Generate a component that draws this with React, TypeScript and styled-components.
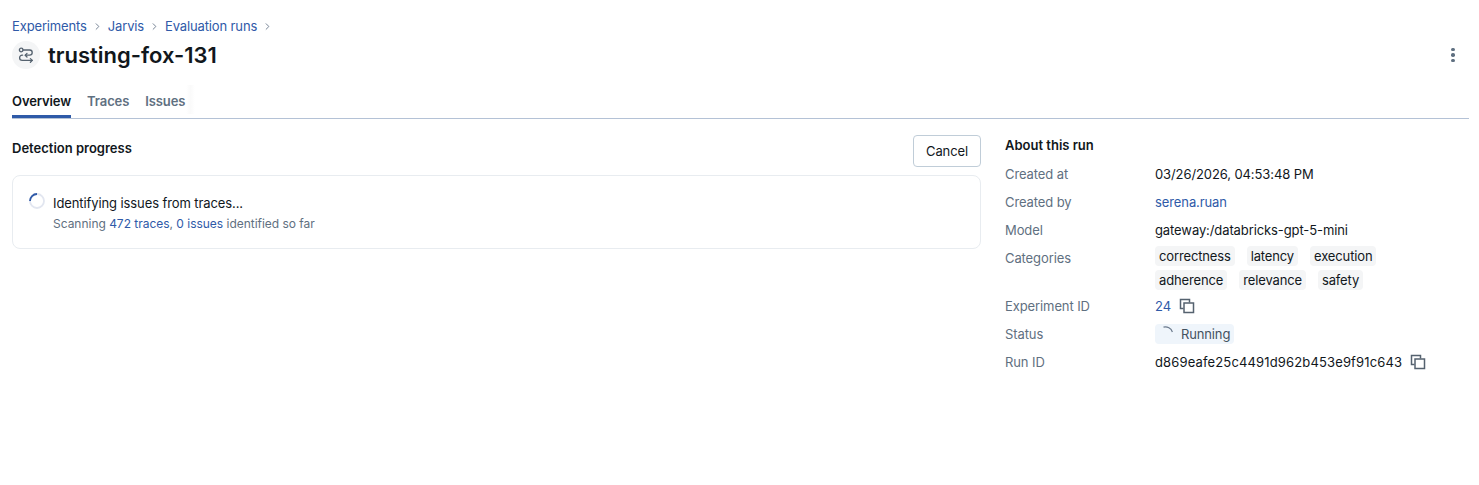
import React from 'react';
import styled, { createGlobalStyle } from 'styled-components';
import { ChevronRight } from 'lucide-react';

const GlobalStyle = createGlobalStyle`
  html, body {
    margin: 0;
    padding: 0;
    background: #fff;
    font-family: Inter, "Liberation Sans", sans-serif;
    font-size: 13px;
    letter-spacing: -0.1px;
    color: #11171c;
  }
`;

const Page = styled.div`
  padding: 16px 10px 0 12px;
  height: 485px;
  box-sizing: border-box;
  overflow: hidden;
`;

const Breadcrumbs = styled.nav`
  display: flex;
  align-items: center;
  height: 20px;
  color: #6b7a8c;
`;

const Crumb = styled.a`
  color: #2f5aa8;
  font-size: 13px;
  letter-spacing: -0.14px;
`;

const Separator = styled.span`
  display: flex;
  width: 21px;
  justify-content: center;
`;

const TitleRow = styled.div`
  display: flex;
  align-items: center;
  margin-top: 2px;
  height: 34px;
`;

const TitleIcon = styled.span`
  display: flex;
  align-items: center;
  justify-content: center;
  width: 28px;
  height: 28px;
  border-radius: 50%;
  background: #f4f5f6;
  color: #55626f;
`;

const Title = styled.h1`
  margin: 0 0 0 8px;
  font-size: 22px;
  line-height: 28px;
  font-weight: 600;
  letter-spacing: 0;
  color: #11171c;
`;

const MenuButton = styled.button`
  margin-left: auto;
  margin-right: 8px;
  width: 16px;
  height: 16px;
  padding: 0;
  display: flex;
  flex-direction: column;
  align-items: center;
  justify-content: center;
  gap: 2px;
  border: 0;
  background: none;
`;

const Dot = styled.span`
  width: 3.5px;
  height: 3.5px;
  border-radius: 50%;
  background: #5f7081;
`;

const Tabs = styled.div`
  display: flex;
  gap: 16px;
  margin-top: 13px;
  height: 33px;
  border-bottom: 1px solid #b4c2d6;
`;

const Tab = styled.div<{ $active?: boolean }>`
  height: 33px;
  box-sizing: border-box;
  padding-top: 6px;
  font-size: 13px;
  line-height: 20px;
  font-weight: 600;
  color: ${p => (p.$active ? '#11171c' : '#5f7081')};
  border-bottom: 3px solid ${p => (p.$active ? '#2f5aa8' : 'transparent')};
`;

const TabFade = styled.span`
  width: 9px;
  height: 29px;
  margin-left: -15px;
  background: linear-gradient(90deg, #fff, #fafafa 50%, #fff);
`;

const Columns = styled.div`
  display: grid;
  grid-template-columns: 969px 1fr;
  gap: 24px;
  margin-top: 16px;
`;

const SectionHead = styled.div`
  display: flex;
  align-items: center;
  justify-content: space-between;
  height: 32px;
`;

const SectionTitle = styled.h2`
  margin: 0;
  font-size: 13px;
  line-height: 20px;
  font-weight: 600;
  letter-spacing: 0;
  color: #11171c;
`;

const DetectionTitle = styled(SectionTitle)`
  padding-bottom: 6px;
`;

const CancelButton = styled.button`
  width: 68px;
  height: 32px;
  padding: 0;
  border: 1px solid #c0cdd8;
  border-radius: 4px;
  background: #fff;
  font: inherit;
  letter-spacing: inherit;
  color: #11171c;
`;

const ProgressCard = styled.div`
  margin-top: 8px;
  display: flex;
  gap: 8px;
  height: 74px;
  box-sizing: border-box;
  padding: 17px 16px 16px;
  border: 1px solid #e8ecf0;
  border-radius: 8px;
`;

const SpinnerWrap = styled.span`
  display: flex;
  width: 16px;
  height: 16px;
`;

const ProgressText = styled.div`
  display: flex;
  flex-direction: column;
  line-height: 20px;
  gap: 2px;
`;

const ProgressSub = styled.div`
  font-size: 12px;
  line-height: 18px;
  letter-spacing: -0.02px;
  color: #5f7081;
`;

const Link = styled.a`
  color: #2f5aa8;
`;

const AboutTitle = styled(SectionTitle)`
  margin-bottom: 5px;
`;

const Row = styled.div`
  display: grid;
  grid-template-columns: 150px 1fr;
  min-height: 28px;
  align-items: start;
  line-height: 20px;
  padding-top: 4px;
  box-sizing: border-box;
`;

const Label = styled.span`
  font-size: 13px;
  color: #5f7081;
`;

const Value = styled.span`
  display: flex;
  align-items: center;
  gap: 8px;
  font-size: 13px;
  color: #11171c;
`;

const RunId = styled.span`
  letter-spacing: 0.145px;
`;

const TagList = styled.div`
  display: flex;
  flex-wrap: wrap;
  gap: 4px 12px;
  margin-top: -2px;
  padding-bottom: 2px;
  width: 260px;
`;

const Tag = styled.span`
  height: 20px;
  padding: 0 4px;
  border-radius: 4px;
  background: #f4f5f6;
  line-height: 20px;
  font-size: 13px;
  letter-spacing: -0.14px;
  color: #11171c;
`;

const StatusPill = styled.span`
  display: inline-flex;
  align-items: center;
  gap: 6px;
  height: 20px;
  padding: 0 4px;
  border-radius: 4px;
  background: #eff5fb;
  letter-spacing: -0.14px;
  color: #44525f;
`;

const RunsIcon = () => (
  <svg width="16" height="16" viewBox="0 0 16 16" fill="none" stroke="currentColor" strokeWidth="1.3" strokeLinecap="round" strokeLinejoin="round">
    <circle cx="3.2" cy="3" r="1.8" />
    <path d="M5 3h6.6a2.4 2.4 0 0 1 0 5.2H7.4" />
    <path d="M9 6.4 7.2 8.2 9 10" />
    <path d="M4.6 8.2H4.2a2.6 2.6 0 0 0 0 5.2h10" />
    <path d="M12.4 11.6l1.9 1.8-1.9 1.8" />
  </svg>
);

const Spinner = () => (
  <svg width="16" height="16" viewBox="0 0 16 16" fill="none" strokeWidth="1.8">
    <circle cx="8" cy="8" r="7" stroke="#e2e6f0" />
    <path d="M1 8a7 7 0 0 1 7-7" stroke="#2f5aa8" />
  </svg>
);

const MiniSpinner = () => (
  <svg width="16" height="16" viewBox="0 0 16 16" fill="none" stroke="#6b7a8c" strokeWidth="1.2">
    <path d="M4.5 1.2A7.4 7.4 0 0 1 13.4 6" />
  </svg>
);

const CopyIcon = () => (
  <svg width="16" height="16" viewBox="0 0 16 16" fill="none" stroke="#55626f" strokeWidth="1.5">
    <path d="M10.5 4.5V1.5h-9v9h3" />
    <rect x="5" y="5" width="9.5" height="9.5" />
  </svg>
);

const crumbs = ['Experiments', 'Jarvis', 'Evaluation runs'];

const App: React.FC = () => (
  <Page>
    <GlobalStyle />
    <Breadcrumbs>
      {crumbs.map(c => (
        <React.Fragment key={c}>
          <Crumb>{c}</Crumb>
          <Separator>
            <ChevronRight size={11} />
          </Separator>
        </React.Fragment>
      ))}
    </Breadcrumbs>
    <TitleRow>
      <TitleIcon>
        <RunsIcon />
      </TitleIcon>
      <Title>trusting-fox-131</Title>
      <MenuButton aria-label="More">
        <Dot />
        <Dot />
        <Dot />
      </MenuButton>
    </TitleRow>
    <Tabs>
      <Tab $active>Overview</Tab>
      <Tab>Traces</Tab>
      <Tab>Issues</Tab>
      <TabFade />
    </Tabs>
    <Columns>
      <section>
        <SectionHead>
          <DetectionTitle>Detection progress</DetectionTitle>
          <CancelButton>Cancel</CancelButton>
        </SectionHead>
        <ProgressCard>
          <SpinnerWrap>
            <Spinner />
          </SpinnerWrap>
          <ProgressText>
            <div>Identifying issues from traces...</div>
            <ProgressSub>
              Scanning <Link>472 traces</Link>, <Link>0 issues</Link> identified so far
            </ProgressSub>
          </ProgressText>
        </ProgressCard>
      </section>
      <section>
        <AboutTitle>About this run</AboutTitle>
        <Row>
          <Label>Created at</Label>
          <Value>03/26/2026, 04:53:48 PM</Value>
        </Row>
        <Row>
          <Label>Created by</Label>
          <Value>
            <Link>serena.ruan</Link>
          </Value>
        </Row>
        <Row>
          <Label>Model</Label>
          <Value>gateway:/databricks-gpt-5-mini</Value>
        </Row>
        <Row>
          <Label>Categories</Label>
          <TagList>
            {['correctness', 'latency', 'execution', 'adherence', 'relevance', 'safety'].map(t => (
              <Tag key={t}>{t}</Tag>
            ))}
          </TagList>
        </Row>
        <Row>
          <Label>Experiment ID</Label>
          <Value>
            <Link>24</Link>
            <CopyIcon />
          </Value>
        </Row>
        <Row>
          <Label>Status</Label>
          <Value>
            <StatusPill>
              <MiniSpinner />
              Running
            </StatusPill>
          </Value>
        </Row>
        <Row>
          <Label>Run ID</Label>
          <Value>
            <RunId>d869eafe25c4491d962b453e9f91c643</RunId>
            <CopyIcon />
          </Value>
        </Row>
      </section>
    </Columns>
  </Page>
);

export default App;
